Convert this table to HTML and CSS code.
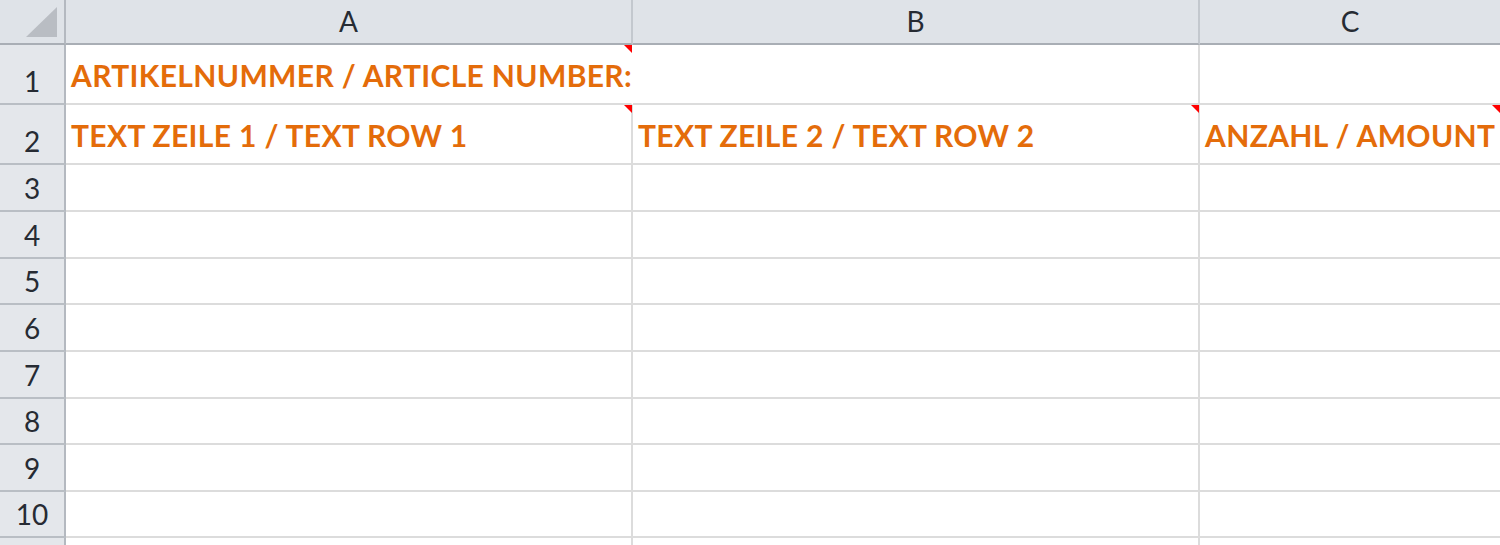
FILE: index.html
```html
<!DOCTYPE html>
<html lang="de">
<head>
<meta charset="utf-8">
<title>Sheet</title>
<link rel="stylesheet" href="styles.css">
</head>
<body>
<div class="sheet">
  <div class="corner"><span class="corner-tri"></span></div>
  <div class="colhead">A</div>
  <div class="colhead">B</div>
  <div class="colhead last">C</div>

  <div class="rowhead r-tall">1</div>
  <div class="cell r-tall overflow note"><span class="txt">ARTIKELNUMMER / ARTICLE NUMBER:</span></div>
  <div class="cell r-tall"></div>
  <div class="cell r-tall last"></div>

  <div class="rowhead r-tall">2</div>
  <div class="cell r-tall note"><span class="txt">TEXT ZEILE 1 / TEXT ROW 1</span></div>
  <div class="cell r-tall note"><span class="txt">TEXT ZEILE 2 / TEXT ROW 2</span></div>
  <div class="cell r-tall last note"><span class="txt">ANZAHL / AMOUNT</span></div>

  <div class="rowhead">3</div><div class="cell"></div><div class="cell"></div><div class="cell last"></div>
  <div class="rowhead">4</div><div class="cell"></div><div class="cell"></div><div class="cell last"></div>
  <div class="rowhead">5</div><div class="cell"></div><div class="cell"></div><div class="cell last"></div>
  <div class="rowhead">6</div><div class="cell"></div><div class="cell"></div><div class="cell last"></div>
  <div class="rowhead">7</div><div class="cell"></div><div class="cell"></div><div class="cell last"></div>
  <div class="rowhead">8</div><div class="cell"></div><div class="cell"></div><div class="cell last"></div>
  <div class="rowhead">9</div><div class="cell"></div><div class="cell"></div><div class="cell last"></div>
  <div class="rowhead">10</div><div class="cell"></div><div class="cell"></div><div class="cell last"></div>
  <div class="rowhead stub"></div><div class="cell stub"></div><div class="cell stub"></div><div class="cell last stub"></div>
</div>
</body>
</html>
```

FILE: styles.css
```css
* { box-sizing: border-box; }
html, body { margin: 0; padding: 0; background: #ffffff; overflow: hidden; }
body { width: 1500px; height: 545px; font-family: Lato, "Open Sans", sans-serif; }

.sheet {
  display: grid;
  grid-template-columns: 66px 567px 567px 1fr;
  grid-template-rows: 45px 60px 60px 47px 47px 46px 47px 47px 46px 47px 46px 7px;
  width: 1500px;
  height: 545px;
  overflow: hidden;
}

.corner {
  background: #dfe3e8;
  border-right: 2px solid #b4b9c0;
  border-bottom: 2px solid #a9aeb5;
  display: flex;
  align-items: flex-end;
  justify-content: flex-end;
  padding: 0 7px 6px 0;
}
.corner-tri {
  width: 31px;
  height: 30px;
  background: #b9bdc3;
  clip-path: polygon(100% 0, 100% 100%, 0 100%);
}

.colhead {
  background: #dfe3e8;
  border-right: 2px solid #c3c8ce;
  border-bottom: 2px solid #a9aeb5;
  display: flex;
  align-items: center;
  justify-content: center;
  font-size: 28px;
  color: #262b33;
  padding-bottom: 2px;
}
.colhead.last { border-right: none; }

.rowhead {
  background: #e4e7eb;
  border-right: 2px solid #b4b9c0;
  border-bottom: 2px solid #b9bec4;
  display: flex;
  align-items: flex-end;
  justify-content: center;
  font-size: 28px;
  line-height: 1;
  color: #262b33;
  padding-bottom: 8px;
}
.rowhead.stub { border-bottom: none; padding: 0; }

.cell {
  position: relative;
  border-right: 2px solid #dcdcdc;
  border-bottom: 2px solid #dcdcdc;
  display: flex;
  align-items: flex-end;
  padding: 0 0 13px 5px;
  white-space: nowrap;
}
.cell.last { border-right: none; }
.cell.stub { border-bottom: none; padding: 0; }
.cell.overflow { border-right-color: transparent; overflow: visible; z-index: 1; }

.txt {
  font-weight: 700;
  font-size: 30px;
  letter-spacing: 0.35px;
  line-height: 1;
  color: #e46c0a;
}

.note::after {
  content: "";
  position: absolute;
  top: 0;
  right: -1px;
  width: 8px;
  height: 8px;
  background: #ff0000;
  clip-path: polygon(0 0, 100% 0, 100% 100%);
}
.cell.last.note::after { right: 0; }
```
